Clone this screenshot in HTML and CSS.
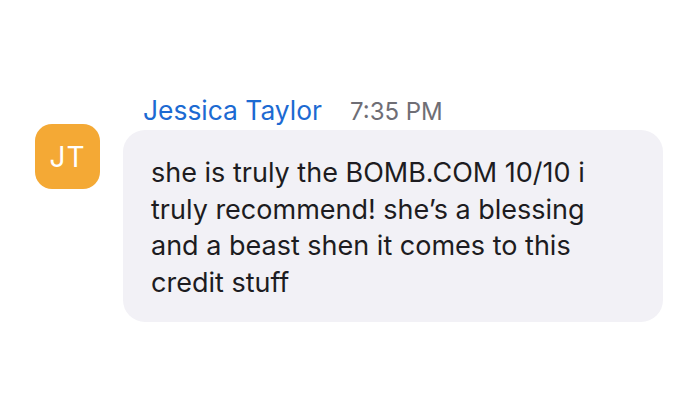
FILE: index.html
```html
<!doctype html>
<html lang="en">

<head>
	<meta charset="UTF-8">
	<title>Message</title>
	<link rel="stylesheet" href="styles.css">
</head>

<body>
	<div class="message">
		<div class="avatar">JT</div>
		<div class="content">
			<div class="meta">
				<span class="name">Jessica Taylor</span>
				<span class="time">7:35 PM</span>
			</div>
			<div class="bubble">
				<p>she is truly the BOMB.COM 10/10 i truly recommend! she’s a blessing and a beast shen it comes to this credit stuff</p>
			</div>
		</div>
	</div>
</body>

</html>
```

FILE: styles.css
```css
* {
	padding: 0;
	margin: 0;
	box-sizing: border-box;
}

body {
	background: #fff;
	font-family: Inter, 'Liberation Sans', sans-serif;
	width: 698px;
	height: 420px;
	overflow: hidden;
}

.message {
	display: flex;
	gap: 23px;
	padding: 94px 0 0 35px;
}

.avatar {
	width: 65px;
	height: 65px;
	margin-top: 30px;
	border-radius: 17px;
	background: #f4a935;
	color: #fff;
	font-size: 28px;
	letter-spacing: 1px;
	display: flex;
	align-items: center;
	justify-content: center;
	flex-shrink: 0;
}

.content {
	width: 540px;
}

.meta {
	display: flex;
	align-items: baseline;
	gap: 28px;
	padding-left: 20px;
	height: 36px;
}

.name {
	color: #1c6ad2;
	font-size: 26.4px;
}

.time {
	color: #6f6e75;
	font-size: 24px;
}

.bubble {
	background: #f2f1f6;
	border-radius: 22px;
	height: 192px;
	padding: 25px 30px 0 28px;
}

.bubble p {
	color: #1d1c21;
	font-size: 27px;
	line-height: 36.5px;
}
```
